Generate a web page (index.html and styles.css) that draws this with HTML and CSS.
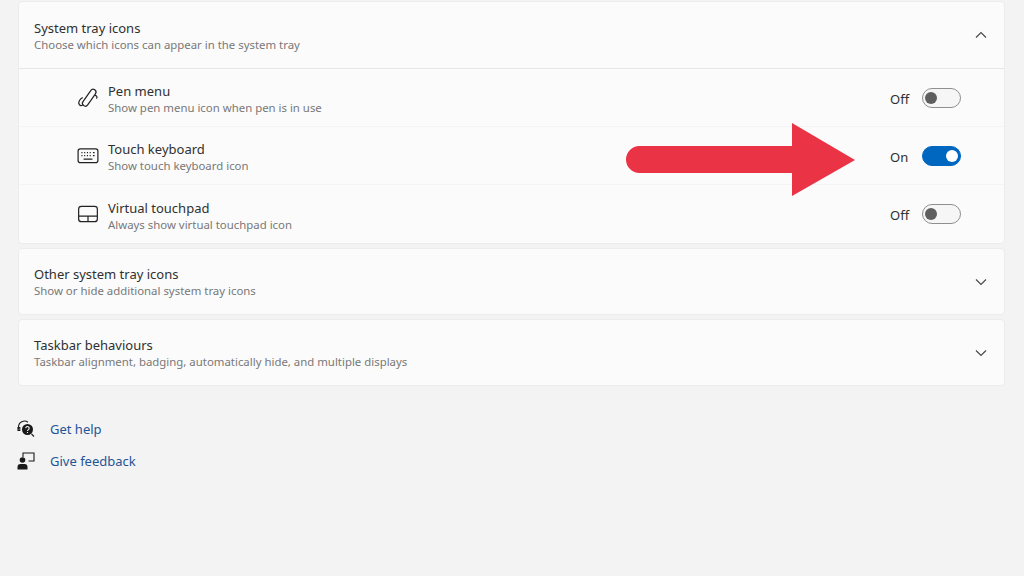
FILE: index.html
```html
<!DOCTYPE html>
<html lang="en">
<head>
<meta charset="utf-8">
<title>Taskbar settings</title>
<link rel="stylesheet" href="styles.css">
</head>
<body>
<main class="page">
  <section class="card">
    <header class="row head">
      <div class="text"><div class="title">System tray icons</div><div class="sub">Choose which icons can appear in the system tray</div></div>
      <svg class="chev" viewBox="0 0 12 8"><path d="M1 6.500 6 1.500 11 6.500"/></svg>
    </header>
    <div class="row item">
      <svg class="ico" viewBox="0 0 20 20"><rect x="8.500" y="1" width="5.200" height="17.500" rx="2.600" transform="rotate(35 11.100 9.750)"/><path d="M5.200 9.500C2.500 11 .8 13.800 2 15.800c.7 1.100 2 1.300 3.200.8M16.300 7.600c1.800.2 2.500 1.400 1.300 2.900"/></svg>
      <div class="text"><div class="title">Pen menu</div><div class="sub">Show pen menu icon when pen is in use</div></div>
      <span class="state">Off</span><span class="toggle"></span>
    </div>
    <div class="row item">
      <svg class="ico" viewBox="0 0 20 20"><rect x="1" y="3.500" width="18" height="12.500" rx="2"/><path class="keys" d="M4 7h1M6.500 7h1M9 7h1M11.500 7h1M14.500 7h1.500M4 9.700h1M6.500 9.700h1M9 9.700h1M11.500 9.700h1M14.500 9.700h1.500M6 12.800h8"/></svg>
      <div class="text"><div class="title">Touch keyboard</div><div class="sub">Show touch keyboard icon</div></div>
      <span class="state">On</span><span class="toggle on"></span>
    </div>
    <div class="row item">
      <svg class="ico" viewBox="0 0 20 20"><rect x="1.500" y="3" width="17" height="14" rx="2.500"/><path d="M1.500 12h17M10 12v5"/></svg>
      <div class="text"><div class="title">Virtual touchpad</div><div class="sub">Always show virtual touchpad icon</div></div>
      <span class="state">Off</span><span class="toggle"></span>
    </div>
  </section>
  <section class="card">
    <div class="row head">
      <div class="text"><div class="title">Other system tray icons</div><div class="sub">Show or hide additional system tray icons</div></div>
      <svg class="chev" viewBox="0 0 12 8"><path d="M1 1.500 6 6.500 11 1.500"/></svg>
    </div>
  </section>
  <section class="card">
    <div class="row head">
      <div class="text"><div class="title">Taskbar behaviours</div><div class="sub">Taskbar alignment, badging, automatically hide, and multiple displays</div></div>
      <svg class="chev" viewBox="0 0 12 8"><path d="M1 1.500 6 6.500 11 1.500"/></svg>
    </div>
  </section>
  <nav class="links">
    <a class="link">
      <svg class="link-ico" viewBox="0 0 18 18"><path class="thin" d="M1.500 9.500V7a6 6 0 0 1 9.500-4.800"/><path class="thin" d="M1 7.500h1.800v3H1z"/><circle cx="10.500" cy="9.500" r="5.500" class="solid"/><path class="thin" d="M14.500 14 17 16.500"/><path class="q" d="M8.800 8.200a1.700 1.700 0 1 1 2.600 1.400c-.6.400-.9.700-.9 1.300M10.500 12v1"/></svg>
      <span>Get help</span>
    </a>
    <a class="link">
      <svg class="link-ico" viewBox="0 0 18 18"><circle cx="5.500" cy="8" r="2.800" class="solid"/><path class="solid" d="M.5 17.500v-2.500a3 3 0 0 1 3-3h4a3 3 0 0 1 3 3v2.500z"/><path class="thin" d="M6 5V1h11v8h-5.500"/></svg>
      <span>Give feedback</span>
    </a>
  </nav>
</main>
<svg class="arrow" viewBox="0 0 230 74"><path d="M13.500 23H166V0L229 37 166 73V50H13.500a13.500 13.500 0 0 1 0-27Z"/></svg>
</body>
</html>
```
FILE: styles.css
```css
* { box-sizing: border-box; }
html, body { margin: 0; height: 100%; }
body {
  background: #f3f3f3;
  font-family: "Noto Sans", "Open Sans", sans-serif;
  color: #1f1f1f;
  overflow: hidden;
  position: relative;
}
.page { padding: 1px 19px 0 18px; display: flex; flex-direction: column; gap: 4px; }
.card {
  background: #fbfbfb;
  border: 1px solid #ececec;
  border-radius: 4px;
}
.row { display: flex; align-items: center; }
.head { height: 65px; padding: 0 17px 0 15px; justify-content: space-between; }
.head .text { padding-top: 1px; }
.card > .head:not(:last-child) { height: 67px; border-bottom: 1px solid #e6e6e6; }
.item { height: 58px; padding: 0 43px 0 58px; border-bottom: 1px solid #f4f4f4; }
.item:last-child { border-bottom: 0; }
.item .text { padding-top: 3px; }
.text { flex: 1; }
.title { font-size: 13px; line-height: 18px; color: #303030; }
.sub { font-size: 11.400px; line-height: 16px; color: #787878; }
.chev { width: 12px; height: 8px; fill: none; stroke: #4a4a4a; stroke-width: 1.200; }
.ico { width: 22px; height: 22px; margin-right: 9px; fill: none; stroke: #222; stroke-width: 1.100; }
.keys { stroke-width: 1.200; }
.state { font-size: 13px; width: 32px; padding-top: 2px; color: #303030; }
.toggle {
  position: relative; width: 39px; height: 20px; border-radius: 10px;
  border: 1px solid #8f8f8f; background: #f6f6f6;
}
.toggle::after {
  content: ""; position: absolute; left: 2px; top: 3px; width: 12px; height: 12px;
  border-radius: 50%; background: #5f5f5f;
}
.toggle.on { background: #0067c0; border-color: #0067c0; }
.toggle.on::after { left: auto; right: 2px; background: #fff; }
.links { display: flex; flex-direction: column; gap: 12px; margin-top: 29px; }
.link { display: flex; align-items: center; height: 20px; font-size: 13px; color: #1f5596; }
.link-ico { width: 18px; height: 18px; margin-right: 15px; margin-left: -1px; fill: none; stroke: #1a1a1a; }
.thin { fill: none; stroke: #1a1a1a; stroke-width: 1.100; }
.solid { fill: #1a1a1a; stroke: none; }
.q { fill: none; stroke: #f3f3f3; stroke-width: 1.100; }
.arrow { position: absolute; left: 626px; top: 123px; width: 230px; height: 74px; fill: #eb3346; }
```
